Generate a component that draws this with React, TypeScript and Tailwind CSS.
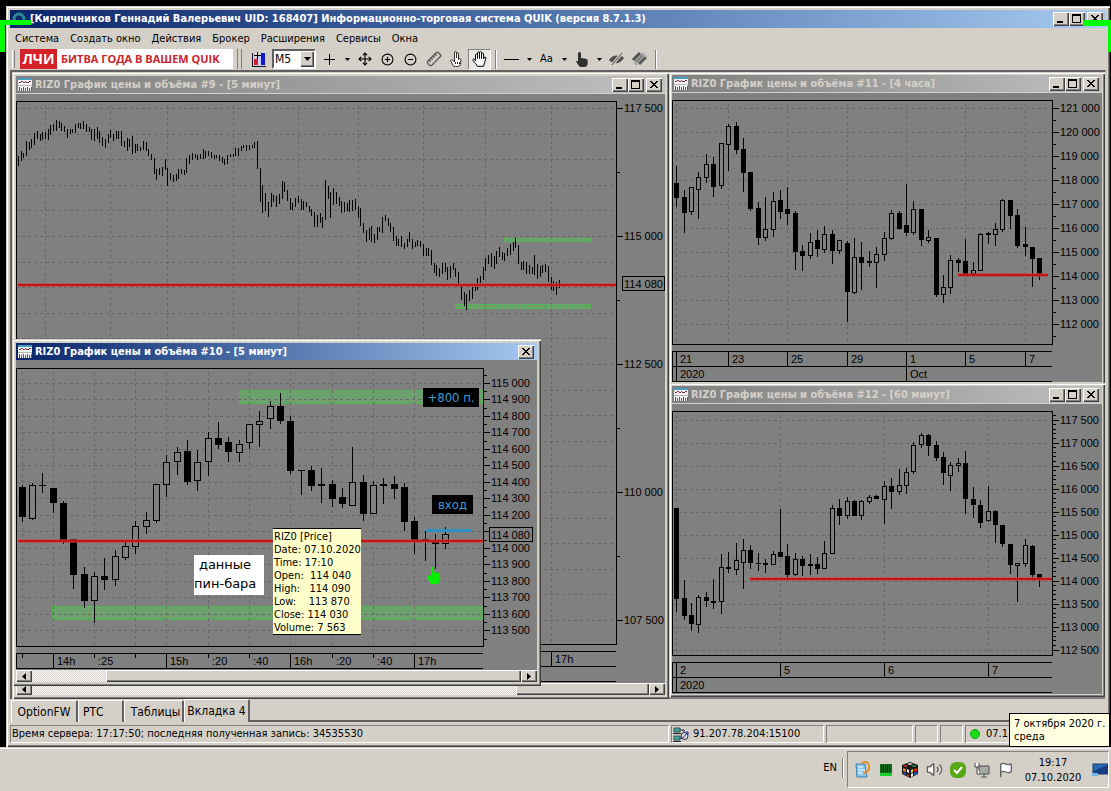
import type { ReactNode } from 'react'
import { Move, CirclePlus, CircleMinus, Ruler, EyeOff, Flag, Volume2 } from 'lucide-react'

// Chart data is stored in thirds of a pixel, see px()
type Candle = [x: number, high: number, low: number, top: number, bottom: number, up: 0 | 1]
type Bar = [x: number, high: number, low: number]

const UI = "font-['DejaVu_Sans_Condensed','DejaVu_Sans',sans-serif]"
const AXIS = "font-['Liberation_Sans',Arial,sans-serif] text-[11px]"
const RAISED = 'bg-[#d4d0c8] shadow-[inset_1px_1px_#ffffff,inset_-1px_-1px_#404040,inset_-2px_-2px_#808080]'
const FRAME = 'bg-[#d4d0c8] shadow-[inset_1px_1px_#d4d0c8,inset_2px_2px_#ffffff,inset_-1px_-1px_#404040,inset_-2px_-2px_#808080]'
const SUNKEN = 'border border-t-[#808080] border-l-[#808080] border-r-white border-b-white'

const MENU = ['Система', 'Создать окно', 'Действия', 'Брокер', 'Расширения', 'Сервисы', 'Окна']

const BARS_9: Bar[] = [
  [55, 183, 212], [65, 168, 195], [70, 175, 186], [79, 138, 180], [88, 141, 162], [95, 132, 156], [103, 114, 147],
  [112, 108, 129], [121, 117, 137], [127, 111, 132], [137, 111, 131], [145, 102, 132], [151, 90, 117], [160, 87, 105],
  [170, 75, 107], [178, 78, 98], [184, 84, 105], [193, 93, 110], [202, 102, 126], [211, 102, 114], [217, 102, 111],
  [226, 87, 111], [235, 84, 98], [241, 84, 99], [250, 78, 99], [260, 87, 108], [268, 96, 110], [274, 102, 134],
  [283, 102, 135], [292, 96, 129], [298, 108, 141], [307, 126, 150], [316, 132, 158], [325, 117, 143], [331, 105, 126],
  [340, 117, 135], [349, 110, 129], [355, 108, 131], [364, 108, 150], [373, 138, 153], [382, 129, 165], [388, 132, 153],
  [397, 123, 174], [406, 147, 171], [412, 148, 165], [421, 156, 167], [430, 138, 164], [439, 141, 167], [445, 162, 182],
  [454, 178, 192], [463, 189, 234], [469, 222, 252], [478, 220, 237], [487, 216, 240], [496, 192, 224], [502, 219, 272],
  [511, 234, 252], [520, 240, 258], [529, 237, 256], [535, 222, 249], [544, 222, 234], [553, 225, 237], [559, 189, 231],
  [568, 180, 204], [577, 174, 192], [586, 177, 186], [592, 180, 192], [601, 177, 189], [610, 162, 189], [616, 168, 186],
  [625, 168, 180], [634, 171, 186], [643, 180, 189], [649, 180, 186], [658, 180, 197], [667, 186, 203], [673, 192, 209],
  [682, 180, 204], [691, 177, 185], [700, 177, 183], [706, 159, 180], [715, 159, 180], [724, 153, 165], [730, 150, 158],
  [739, 151, 165], [748, 151, 164], [757, 150, 156], [763, 141, 156], [772, 138, 219], [781, 219, 318], [787, 270, 351],
  [796, 294, 345], [805, 321, 363], [814, 294, 335], [820, 300, 318], [829, 303, 333], [838, 297, 326], [847, 258, 309],
  [853, 261, 290], [862, 285, 317], [871, 309, 342], [877, 324, 342], [886, 309, 333], [895, 303, 321], [904, 312, 342],
  [910, 318, 342], [919, 321, 335], [928, 333, 350], [934, 342, 360], [943, 351, 393], [952, 360, 393], [961, 354, 381],
  [967, 366, 396], [976, 255, 372], [985, 273, 309], [991, 291, 368], [1000, 279, 327], [1009, 291, 324], [1018, 306, 330],
  [1024, 318, 353], [1033, 321, 350], [1042, 324, 345], [1048, 315, 350], [1057, 315, 345], [1066, 312, 342], [1075, 333, 368],
  [1081, 339, 392], [1090, 384, 413], [1099, 405, 438], [1108, 399, 432], [1114, 393, 438], [1123, 417, 443], [1132, 396, 434],
  [1138, 396, 410], [1147, 366, 413], [1156, 360, 377], [1165, 369, 390], [1171, 384, 410], [1180, 396, 437], [1189, 423, 450],
  [1195, 432, 450], [1204, 423, 455], [1213, 444, 461], [1222, 432, 454], [1228, 411, 440], [1237, 432, 459], [1246, 441, 455],
  [1252, 435, 452], [1261, 438, 453], [1270, 447, 482], [1279, 459, 482], [1285, 459, 482], [1294, 465, 509], [1303, 504, 533],
  [1309, 510, 540], [1318, 519, 543], [1327, 504, 534], [1336, 504, 528], [1342, 516, 552], [1351, 513, 548], [1360, 504, 522],
  [1366, 519, 543], [1375, 531, 567], [1384, 573, 614], [1393, 591, 630], [1399, 597, 644], [1408, 585, 615], [1417, 576, 611],
  [1426, 573, 585], [1432, 549, 582], [1441, 543, 563], [1450, 516, 552], [1456, 489, 527], [1465, 480, 506], [1474, 474, 515],
  [1483, 483, 521], [1489, 468, 506], [1498, 456, 483], [1507, 471, 494], [1513, 474, 495], [1522, 459, 482], [1531, 447, 479],
  [1540, 441, 465], [1546, 429, 458], [1555, 450, 506], [1564, 501, 524], [1570, 498, 522], [1579, 501, 534], [1588, 510, 536],
  [1597, 516, 536], [1603, 480, 537], [1612, 507, 551], [1621, 513, 545], [1627, 510, 533], [1636, 507, 528], [1645, 513, 560],
  [1654, 546, 582], [1660, 558, 587], [1669, 561, 597], [1678, 555, 576],
]

const CANDLES_10: Candle[] = [
  [67, 435, 543, 441, 528, 0], [97, 430, 537, 437, 535, 1], [127, 399, 456, 435, 437, 0], [160, 444, 518, 444, 488, 0],
  [191, 484, 609, 489, 603, 0], [220, 597, 746, 598, 704, 0], [253, 682, 803, 702, 782, 0], [284, 696, 846, 709, 782, 1],
  [314, 654, 749, 708, 719, 0], [346, 630, 735, 649, 718, 1], [376, 606, 657, 619, 653, 1], [406, 543, 641, 559, 619, 1],
  [439, 516, 581, 542, 559, 1], [470, 432, 548, 433, 541, 1], [500, 345, 470, 367, 433, 1], [532, 321, 402, 337, 364, 1],
  [562, 300, 432, 333, 423, 0], [593, 330, 450, 367, 422, 1], [626, 276, 405, 295, 364, 1], [655, 246, 326, 294, 314, 0],
  [685, 291, 365, 307, 335, 0], [718, 300, 365, 313, 338, 1], [749, 252, 326, 253, 307, 1], [779, 213, 318, 244, 253, 1],
  [812, 183, 266, 199, 236, 1], [842, 160, 251, 198, 240, 0], [871, 228, 401, 243, 392, 0], [904, 390, 464, 390, 392, 0],
  [934, 378, 450, 390, 437, 0], [964, 384, 486, 433, 437, 0], [997, 421, 500, 432, 476, 0], [1028, 444, 501, 471, 491, 0],
  [1058, 321, 496, 427, 496, 1], [1090, 405, 542, 426, 521, 0], [1120, 423, 521, 436, 520, 1], [1151, 414, 489, 432, 437, 0],
  [1183, 408, 474, 432, 446, 0], [1213, 429, 572, 441, 545, 0], [1243, 531, 641, 543, 600, 0], [1276, 573, 662, 597, 600, 0],
  [1307, 582, 686, 606, 611, 0], [1337, 561, 626, 583, 611, 1],
]

const CANDLES_11: Candle[] = [
  [25, 290, 408, 340, 383, 0], [49, 360, 486, 381, 426, 0], [70, 351, 434, 352, 425, 1], [92, 306, 444, 322, 358, 1],
  [116, 252, 338, 283, 322, 1], [137, 262, 380, 283, 350, 0], [161, 219, 356, 220, 347, 1], [182, 162, 302, 169, 223, 1],
  [206, 156, 249, 168, 239, 0], [227, 205, 363, 237, 308, 0], [248, 306, 420, 307, 416, 0], [271, 396, 524, 415, 503, 0],
  [292, 381, 510, 478, 503, 1], [317, 366, 500, 395, 478, 1], [337, 360, 446, 390, 425, 0], [359, 351, 464, 417, 431, 0],
  [383, 424, 597, 430, 545, 0], [404, 525, 602, 543, 557, 0], [428, 489, 566, 517, 556, 1], [449, 480, 560, 510, 536, 0],
  [470, 468, 546, 493, 538, 1], [494, 480, 581, 492, 542, 0], [515, 510, 551, 511, 542, 1], [539, 514, 755, 519, 665, 0],
  [560, 504, 670, 562, 667, 1], [581, 516, 659, 561, 578, 0], [605, 543, 588, 573, 577, 0], [626, 532, 651, 553, 577, 1],
  [650, 486, 572, 505, 553, 1], [671, 420, 509, 430, 505, 1], [695, 423, 479, 430, 476, 0], [716, 342, 497, 465, 488, 0],
  [737, 393, 494, 418, 487, 1], [761, 417, 527, 418, 509, 0], [782, 480, 516, 502, 510, 1], [806, 504, 678, 505, 674, 0],
  [827, 615, 698, 652, 674, 1], [848, 555, 671, 571, 653, 1], [872, 564, 605, 571, 578, 0], [893, 507, 612, 573, 611, 0],
  [917, 576, 612, 601, 611, 1], [938, 489, 602, 493, 601, 1], [962, 486, 521, 489, 493, 0], [983, 459, 527, 479, 494, 1],
  [1004, 387, 483, 391, 479, 1], [1028, 390, 476, 391, 437, 0], [1049, 417, 533, 436, 527, 0], [1073, 471, 557, 522, 530, 0],
  [1094, 531, 650, 531, 566, 0], [1115, 564, 627, 565, 612, 0],
]

const CANDLES_12: Candle[] = [
  [25, 385, 693, 385, 656, 0], [49, 600, 719, 655, 707, 0], [70, 669, 752, 706, 731, 0], [92, 645, 758, 652, 734, 1],
  [116, 636, 680, 651, 662, 0], [137, 597, 684, 663, 667, 0], [161, 522, 701, 562, 665, 1], [182, 516, 578, 562, 565, 0],
  [206, 489, 584, 541, 568, 1], [227, 477, 624, 511, 548, 1], [248, 495, 566, 510, 548, 0], [271, 519, 570, 549, 551, 0],
  [292, 537, 578, 549, 553, 0], [317, 513, 554, 523, 553, 1], [337, 387, 530, 516, 530, 0], [359, 492, 593, 529, 584, 0],
  [383, 519, 585, 538, 584, 1], [404, 528, 586, 537, 557, 0], [428, 523, 584, 552, 556, 0], [449, 531, 581, 552, 566, 0],
  [470, 483, 566, 520, 565, 1], [494, 375, 521, 385, 520, 1], [515, 357, 434, 385, 407, 0], [539, 351, 416, 363, 406, 1],
  [560, 360, 407, 364, 407, 0], [581, 362, 418, 364, 407, 1], [605, 345, 371, 352, 364, 1], [626, 346, 356, 349, 356, 0],
  [650, 303, 429, 319, 359, 1], [671, 294, 386, 318, 335, 0], [695, 267, 344, 316, 334, 1], [716, 264, 341, 276, 316, 1],
  [737, 186, 281, 196, 275, 1], [761, 159, 203, 166, 194, 1], [782, 162, 227, 165, 197, 0], [806, 183, 242, 195, 233, 0],
  [827, 216, 314, 231, 278, 0], [848, 246, 332, 256, 287, 1], [872, 234, 275, 250, 257, 1], [893, 213, 401, 250, 356, 0],
  [917, 321, 413, 357, 374, 0], [938, 360, 443, 375, 428, 0], [962, 318, 423, 394, 422, 1], [983, 390, 486, 394, 434, 0],
  [1004, 435, 500, 436, 491, 0], [1027, 492, 581, 493, 554, 0], [1049, 550, 665, 550, 556, 1], [1073, 477, 560, 496, 551, 1],
  [1094, 495, 590, 498, 584, 0], [1115, 582, 620, 583, 598, 0],
]

const px = (v: number) => Math.floor(v / 3)

const series = (from: number, step: number, count: number) =>
  Array.from({ length: count }, (_, i) => Math.round(from + i * step))

const price = (v: number) => `${Math.floor(v / 1000)} ${String(v % 1000).padStart(3, '0')}`

function HLine({ x1, x2, y, color = '#000' }: { x1: number; x2: number; y: number; color?: string }) {
  return <rect x={x1} y={y} width={x2 - x1} height={1} fill={color} />
}

function VLine({ x, y1, y2 }: { x: number; y1: number; y2: number }) {
  return <rect x={x} y={y1} width={1} height={y2 - y1} />
}

function Grid({ left, top, right, bottom, xs, ys }: {
  left: number; top: number; right: number; bottom: number; xs: number[]; ys: number[]
}) {
  return (
    <g>
      <g stroke="#686868" strokeDasharray="3 3">
        {xs.map((x) => <line key={x} x1={x + 0.5} x2={x + 0.5} y1={top + 4} y2={bottom} />)}
        {ys.map((y) => <line key={y} x1={left} x2={right} y1={y + 0.5} y2={y + 0.5} />)}
      </g>
      <HLine x1={left} x2={right + 1} y={top} />
      <HLine x1={left} x2={right + 1} y={bottom} />
      <VLine x={left} y1={top} y2={bottom} />
      <VLine x={right} y1={top} y2={bottom} />
    </g>
  )
}

function PriceAxis({ x, majors, minors, labels }: { x: number; majors: number[]; minors: number[]; labels: string[] }) {
  return (
    <g>
      {minors.map((y) => <HLine key={`m${y}`} x1={x} x2={x + 4} y={y} />)}
      {majors.map((y, i) => (
        <g key={y}>
          <HLine x1={x} x2={x + 7} y={y} />
          <text x={x + 8} y={y + 4} className={AXIS}>{labels[i]}</text>
        </g>
      ))}
    </g>
  )
}

function Candles({ data, ox, oy, half }: { data: Candle[]; ox: number; oy: number; half: number }) {
  return (
    <g>
      {data.map(([x, high, low, top, bottom, up]) => {
        const cx = ox + px(x)
        const t = oy + px(top)
        const h = Math.max(px(bottom) - px(top) + 1, 1)
        return (
          <g key={x}>
            <VLine x={cx} y1={oy + px(high)} y2={oy + px(low) + 1} />
            <rect x={cx - half} y={t} width={half * 2 + 1} height={h} />
            {up === 1 && h > 2 && <rect x={cx - half + 1} y={t + 1} width={half * 2 - 1} height={h - 2} fill="#808080" />}
          </g>
        )
      })}
    </g>
  )
}

function RedLine({ x1, x2, y }: { x1: number; x2: number; y: number }) {
  return (
    <g>
      <rect x={x1} y={y - 1} width={x2 - x1} height={4} fill="#c04848" opacity={0.6} />
      <rect x={x1} y={y} width={x2 - x1} height={2} fill="#c41414" />
    </g>
  )
}

function GreenZone({ x1, x2, y1, y2 }: { x1: number; x2: number; y1: number; y2: number }) {
  return (
    <g>
      <rect x={x1} y={y1} width={x2 - x1} height={y2 - y1} fill="#58c058" opacity={0.5} />
      <rect x={x1 + 0.5} y={y1 + 0.5} width={x2 - x1 - 1} height={y2 - y1 - 1} fill="none" stroke="#48c048" strokeDasharray="4 2" />
    </g>
  )
}

function ChartCanvas({ viewBox, label, children }: { viewBox: string; label: string; children: ReactNode }) {
  return (
    <svg viewBox={viewBox} role="img" aria-label={label} shapeRendering="crispEdges" className="block w-full h-auto bg-[#808080]">
      {children}
    </svg>
  )
}

function CaptionButton({ kind }: { kind: 'min' | 'max' | 'close' }) {
  return (
    <button aria-label={kind} className={`w-4 h-[14px] flex items-center justify-center ${RAISED} ${kind === 'close' ? 'ml-0.5' : ''}`}>
      <svg width="16" height="14" viewBox="0 0 16 14" shapeRendering="crispEdges" aria-hidden="true">
        {kind === 'min' && <rect x="4" y="9" width="6" height="2" />}
        {kind === 'max' && <path d="M3 2h9v9H3z M4 4v6h7V4z" fillRule="evenodd" />}
        {kind === 'close' && <path d="M4 3h2v1h1v1h2V4h1V3h2v1h-1v1h-1v1H9v1h1v1h1v1h1v1h-2V9H9V8H7v1H6v1H4V9h1V8h1V7h1V6H6V5H5V4H4z" />}
      </svg>
    </button>
  )
}

function ChartIcon() {
  return (
    <svg width="14" height="13" viewBox="0 0 14 13" shapeRendering="crispEdges" aria-hidden="true" className="shrink-0">
      <rect width="14" height="13" fill="#f4f4f4" />
      <rect width="14" height="2" fill="#4a9cc0" />
      <path d="M1 4h2v1H1zM3 3h2v1H3zM5 4h2v1H5zM7 3h1v1H7zM8 4h3v1H8zM11 3h2v1h-2z" fill="#803040" />
      <rect y="7" width="14" height="1" fill="#b8b8b8" />
      <path d="M1 9h1v4H1zM3 10h1v3H3zM5 9h1v4H5zM7 10h1v3H7zM9 9h1v4H9zM11 10h1v3h-1zM13 9h1v4h-1z" fill="#1c6890" />
    </svg>
  )
}

function ChartTitle({ title, active, closeOnly }: { title: string; active?: boolean; closeOnly?: boolean }) {
  return (
    <div
      className={`h-[18px] flex items-center gap-[3px] pl-0.5 pr-[3px] border-b ${active
        ? 'bg-linear-to-r from-[#0a246a] to-[#a6caf0] text-white border-[#808080]'
        : 'bg-linear-to-r from-[#808080] to-[#c0c0c0] text-[#d4d0c8] border-[#d4d0c8]'
        }`}
    >
      <ChartIcon />
      <h2 className="flex-1 truncate text-[11px] leading-4 font-bold">{title}</h2>
      <div className="flex">
        {!closeOnly && <CaptionButton kind="min" />}
        {!closeOnly && <CaptionButton kind="max" />}
        <CaptionButton kind="close" />
      </div>
    </div>
  )
}

function ScrollBar({ before, thumb }: { before: string; thumb: string }) {
  return (
    <div className="h-3 flex bg-[repeating-conic-gradient(#ffffff_0_25%,#d4d0c8_0_50%)] bg-[length:2px_2px]">
      <button aria-label="Влево" className={`w-4 shrink-0 flex items-center justify-center ${RAISED}`}>
        <svg width="4" height="7" viewBox="0 0 4 7" aria-hidden="true"><path d="M4 0v7L0 3.5z" /></svg>
      </button>
      <div className={before} />
      <div className={`${thumb} ${RAISED}`} />
      <button aria-label="Вправо" className={`w-4 shrink-0 flex items-center justify-center ${RAISED}`}>
        <svg width="4" height="7" viewBox="0 0 4 7" aria-hidden="true"><path d="M0 0v7l4-3.5z" /></svg>
      </button>
    </div>
  )
}

function Chart9() {
  return (
    <ChartCanvas viewBox="16 94 649 589" label="RIZ0, 5 минут">
      <Grid
        left={16} top={101} right={616} bottom={644}
        xs={[45, 110, 167, 233, 298, 358, 423, 485, 551]}
        ys={series(108, 25.6, 21)}
      />
      <PriceAxis
        x={616}
        majors={series(108, 128, 5)}
        minors={series(172, 128, 4)}
        labels={[117500, 115000, 112500, 110000, 107500].map(price)}
      />
      <GreenZone x1={504} x2={591} y1={238} y2={242} />
      <GreenZone x1={455} x2={591} y1={304} y2={309} />
      {BARS_9.map(([x, high, low]) => <VLine key={x} x={px(x)} y1={95 + px(high)} y2={95 + px(low) + 1} />)}
      <RedLine x1={18} x2={616} y={284} />
      <rect x={622.5} y={276.5} width={42} height={14} fill="#808080" stroke="#000" />
      <text x={624} y={288} className={AXIS}>114 080</text>
      <HLine x1={16} x2={616} y={651} />
      <HLine x1={16} x2={616} y={666} />
      <HLine x1={16} x2={616} y={681} />
      <VLine x={551} y1={651} y2={666} />
      <text x={555} y={663} className={AXIS}>17h</text>
    </ChartCanvas>
  )
}

const TIMES_10: [number, string][] = [
  [53, '14h'], [94, ':25'], [166, '15h'], [208, ':20'], [249, ':40'], [290, '16h'], [332, ':20'], [373, ':40'], [414, '17h'],
]

function Chart10() {
  return (
    <ChartCanvas viewBox="16 361 521 309" label="RIZ0, 5 минут, увеличено">
      <GreenZone x1={239} x2={483} y1={390} y2={404} />
      <GreenZone x1={52} x2={483} y1={606} y2={620} />
      <Grid
        left={16} top={368} right={483} bottom={646}
        xs={[22, 53, 94, 135, 166, 208, 249, 290, 332, 373, 414]}
        ys={series(383, 16.47, 16)}
      />
      <PriceAxis
        x={483}
        majors={series(383, 16.47, 16)}
        minors={series(375, 16.47, 17)}
        labels={series(115000, -100, 16).map((p) => (p === 114100 ? '' : price(p)))}
      />
      <Candles data={CANDLES_10} ox={0} oy={340} half={3} />
      <rect x={426} y={529} width={45} height={3} fill="#2c90c4" />
      <RedLine x1={18} x2={483} y={540} />
      <rect x={489.5} y={527.5} width={43} height={14} fill="#808080" stroke="#000" />
      <text x={491} y={539} className={AXIS}>114 080</text>
      <path
        d="M431 567h2v6l2-1 2 1 2 0 1 2v5l-2 4h-7l-3-5-1-3 2-1 2 1z"
        fill="#00f000" shapeRendering="auto"
      />
      <HLine x1={16} x2={483} y={653} />
      <HLine x1={16} x2={483} y={668} />
      <VLine x={16} y1={653} y2={668} />
      {[22, 135].map((x) => <VLine key={x} x={x} y1={653} y2={658} />)}
      {TIMES_10.map(([x, t]) => (
        <g key={x}>
          <VLine x={x} y1={653} y2={t.endsWith('h') ? 668 : 658} />
          <text x={x + 4} y={665} className={AXIS}>{t}</text>
        </g>
      ))}
    </ChartCanvas>
  )
}

function DateRows({ y, days, months }: { y: number; days: [number, string][]; months: [number, string][] }) {
  return (
    <g>
      {[y, y + 15, y + 30].map((v) => <HLine key={v} x1={672} x2={1052} y={v} />)}
      <VLine x={672} y1={y} y2={y + 30} />
      {days.map(([x, t]) => (
        <g key={x}>
          <VLine x={x} y1={y} y2={y + 15} />
          <text x={x + 4} y={y + 12} className={AXIS}>{t}</text>
        </g>
      ))}
      {months.map(([x, t]) => (
        <g key={x}>
          <VLine x={x} y1={y + 15} y2={y + 30} />
          <text x={x + 4} y={y + 27} className={AXIS}>{t}</text>
        </g>
      ))}
    </g>
  )
}

function Chart11() {
  return (
    <ChartCanvas viewBox="672 93 430 289" label="RIZ0, 4 часа">
      <Grid left={672} top={100} right={1052} bottom={344} xs={[676, 728, 787, 847, 906, 965, 1025]} ys={series(108, 24, 10)} />
      <PriceAxis
        x={1052}
        majors={series(108, 24, 10)}
        minors={series(120, 24, 10)}
        labels={series(121000, -1000, 10).map(price)}
      />
      <Candles data={CANDLES_11} ox={668} oy={70} half={2} />
      <RedLine x1={958} x2={1048} y={274} />
      <DateRows
        y={351}
        days={[[676, '21'], [728, '23'], [787, '25'], [847, '29'], [906, '1'], [965, '5'], [1025, '7']]}
        months={[[676, '2020'], [906, 'Oct']]}
      />
    </ChartCanvas>
  )
}

function Chart12() {
  return (
    <ChartCanvas viewBox="672 404 430 290" label="RIZ0, 60 минут">
      <Grid left={672} top={411} right={1052} bottom={655} xs={[676, 780, 884, 988]} ys={series(420, 23, 11)} />
      <PriceAxis
        x={1052}
        majors={series(420, 23, 11)}
        minors={series(415, 4.6, 52)}
        labels={series(117500, -500, 11).map(price)}
      />
      <Candles data={CANDLES_12} ox={668} oy={380} half={2} />
      <RedLine x1={750} x2={1052} y={578} />
      <DateRows y={662} days={[[676, '2'], [780, '5'], [884, '6'], [988, '7']]} months={[[676, '2020']]} />
    </ChartCanvas>
  )
}

const TOOLTIP = [
  'RIZ0 [Price]', 'Date: 07.10.2020', 'Time: 17:10', 'Open:  114 040', 'High:   114 090', 'Low:    113 870', 'Close: 114 030', 'Volume: 7 563',
]

function Workspace() {
  return (
    <main className="relative grid grid-cols-[657fr_436fr] items-start bg-[#808080] border-t-2 border-l-2 border-r border-t-[#606060] border-l-[#606060] border-r-[#d4d0c8]">
      <section className={`p-1 ${FRAME}`}>
        <ChartTitle title="RIZ0 График цены и объёма #9 - [5 минут]" />
        <Chart9 />
        <ScrollBar before="flex-1" thumb="w-[133px]" />
      </section>

      <div>
        <section className={`p-[3px] ${FRAME}`}>
          <ChartTitle title="RIZ0 График цены и объёма #11 - [4 часа]" />
          <Chart11 />
        </section>
        <section className={`relative -mt-0.5 p-[3px] ${FRAME}`}>
          <ChartTitle title="RIZ0 График цены и объёма #12 - [60 минут]" />
          <Chart12 />
        </section>
      </div>

      {/* Floating chart window on top of #9 */}
      <section className={`absolute left-0 top-[267px] w-[529px] p-1 ${FRAME}`}>
        <ChartTitle title="RIZ0 График цены и объёма #10 - [5 минут]" active closeOnly />
        <div className="relative">
          <Chart10 />
          <span className="absolute left-[407px] top-[27px] w-14 h-[19px] bg-black text-[#3a9ad8] text-center text-[13px] leading-[19px] whitespace-nowrap">+800 п.</span>
          <span className="absolute left-[416px] top-[134px] w-[41px] h-[19px] bg-black text-[#3a9ad8] text-center text-[13px] leading-[19px]">вход</span>
          <p className="absolute left-[178px] top-[194px] w-[70px] h-10 pr-2 bg-white text-center font-['DejaVu_Sans',sans-serif] text-[13px] leading-[19px] whitespace-nowrap">
            данные<br />пин-бара
          </p>
          <div role="tooltip" className="absolute left-[257px] top-[167px] w-[88px] h-[107px] pl-px pt-px bg-[#ffffcc] border-t border-b border-black text-[11px] leading-[13px] whitespace-pre">
            {TOOLTIP.map((line) => <div key={line}>{line}</div>)}
          </div>
        </div>
        <ScrollBar before="w-[74px]" thumb="flex-1" />
      </section>
    </main>
  )
}

function Separator() {
  return <span className="w-[9px] h-[19px] flex justify-center" aria-hidden="true"><span className="w-[2px] bg-[#808080] border-r border-white" /></span>
}

function Tool({ label, pressed, children }: { label: string; pressed?: boolean; children: ReactNode }) {
  return (
    <button
      aria-label={label}
      className={`w-[23px] h-[21px] shrink-0 flex items-center justify-center ${pressed ? `${SUNKEN} bg-[#eae8e4]` : ''}`}
    >
      {children}
    </button>
  )
}

function Drop() {
  return (
    <button aria-label="Список" className="w-3 h-[21px] shrink-0 flex items-center justify-center">
      <svg width="5" height="3" viewBox="0 0 5 3" aria-hidden="true"><path d="M0 0h5L2.5 3z" /></svg>
    </button>
  )
}

function Toolbar() {
  return (
    <div className="h-[22px] flex items-center pl-0.5" role="toolbar">
      <span className="w-[3px] h-[18px] mr-[5px] border-l border-r border-l-white border-r-[#808080]" />
      <a href="#" className="w-[213px] h-5 shrink-0 flex bg-white font-['Open_Sans',sans-serif] font-bold">
        <span className="w-[37px] bg-[#d42027] text-white text-center text-[14px] leading-5">ЛЧИ</span>
        <span className="pl-1 text-[#c8252c] text-[11px] leading-5 whitespace-nowrap">БИТВА ГОДА В ВАШЕМ QUIK</span>
      </a>
      <span className="w-[5px] h-5 ml-1 mr-[5px] border-l border-r border-l-[#808080] border-r-[#808080]" />
      <Tool label="Добавить график">
        <svg width="15" height="15" viewBox="0 0 15 15" shapeRendering="crispEdges" aria-hidden="true">
          <path d="M1 1v13h14" fill="none" stroke="#101030" />
          <rect x="3" y="7" width="4" height="6" fill="#d02030" />
          <rect x="7" y="4" width="3" height="9" fill="#c8d0ff" />
          <rect x="10" y="1" width="4" height="12" fill="#1018c8" />
          <path d="M3 3h7v1H3zM6 0h1v7H6z" fill="#000" />
        </svg>
      </Tool>
      <label className="relative w-11 h-5 ml-0.5 mr-0.5 shrink-0 border-2 border-t-[#606060] border-l-[#606060] border-r-white border-b-white bg-white">
        <span className="sr-only">Интервал</span>
        <select className="block w-full h-full appearance-none bg-white pl-px text-[12px] leading-4 outline-none" defaultValue="M5">
          <option>M5</option>
          <option>M60</option>
        </select>
        <span className={`pointer-events-none absolute right-0 top-0 w-[14px] h-4 flex items-center justify-center ${RAISED}`}>
          <svg width="7" height="4" viewBox="0 0 7 4" aria-hidden="true"><path d="M0 0h7L3.5 4z" /></svg>
        </span>
      </label>
      <Tool label="Перекрестие">
        <svg width="11" height="11" viewBox="0 0 11 11" shapeRendering="crispEdges" aria-hidden="true"><path d="M5 0h1v5h5v1H6v5H5V6H0V5h5z" /></svg>
      </Tool>
      <Drop />
      <Tool label="Переместить"><Move size={14} strokeWidth={2} /></Tool>
      <Tool label="Увеличить"><CirclePlus size={13} strokeWidth={2} /></Tool>
      <Tool label="Уменьшить"><CircleMinus size={13} strokeWidth={2} /></Tool>
      <Tool label="Линейка"><Ruler size={16} strokeWidth={2} className="text-[#585858] -scale-x-100" /></Tool>
      <Tool label="Указатель">
        <svg width="13" height="16" viewBox="0 0 13 16" fill="#fff" stroke="#303030" aria-hidden="true">
          <path d="M4.500 9V2q0-1.500 1-1.500t1 1.500v5V3q0-1.300 1-1.300t1 1.300v5.500q.5-1.500 1.500-1t.8 1.500v3q0 3.500-3.500 3.500h-2q-2.500 0-3-2.500L.5 9.500q.5-1.300 2-.5l2 2z" />
          <path d="M5.500 11v2M7.500 11v2M9.500 11v2" />
        </svg>
      </Tool>
      <Tool label="Рука" pressed>
        <svg width="15" height="16" viewBox="0 0 15 16" fill="#fff" stroke="#000" aria-hidden="true">
          <path d="M3.500 8.500V4q0-1 1-1t1 1v3.500V2q0-1 1-1t1 1v5.500V1.500q0-1 1-1t1 1v6V3q0-1 1-1t1 1v5l.5-1.500q1-1 2 .3l-1.500 5-1 3.500h-6l-2-3L1 9.500q-.5-1.500.7-1.500t1.800 2z" />
        </svg>
      </Tool>
      <Separator />
      <Tool label="Линия"><span className="w-[15px] h-px bg-black" /></Tool>
      <Drop />
      <Tool label="Текст"><span className="text-[11px] leading-4">Aa</span></Tool>
      <Drop />
      <Tool label="Метка">
        <svg width="12" height="15" viewBox="0 0 12 15" fill="#303030" aria-hidden="true">
          <path d="M3.500 0q1.500 0 1.500 1.500V6l5 .8q1.700.3 1.700 2V12q-.7 3-3 3H5q-1.500 0-2.300-1.500L0 9.500q.3-1.500 2 0V1.500Q2 0 3.500 0z" />
        </svg>
      </Tool>
      <Drop />
      <Tool label="Скрыть">
        <svg width="17" height="14" viewBox="0 0 17 14" aria-hidden="true">
          <path d="M1 8Q5 2 11 4L6 10Q3 11 1 8z" fill="#505050" />
          <path d="M16 6q-4 6-9 5l5-7q3 0 4 2z" fill="#505050" />
          <path d="M4 13L14 1" stroke="#d4d0c8" strokeWidth="3" />
          <path d="M4 13L14 1" stroke="#484848" strokeWidth="1" />
        </svg>
      </Tool>
      <Tool label="Удалить объекты">
        <svg width="17" height="16" viewBox="0 0 17 16" strokeWidth="3" aria-hidden="true">
          <path d="M2 9l7-7" stroke="#505050" />
          <path d="M5 11l7-7" stroke="#808080" />
          <path d="M8 13l7-7" stroke="#585858" />
          <path d="M3 11l3 3M11 2l4 4" stroke="#a8a8a8" strokeWidth="2" />
        </svg>
      </Tool>
      <Separator />
    </div>
  )
}

function Tabs() {
  const tab = 'shrink-0 h-[22px] border-t border-l border-white border-r-2 border-r-[#606060] rounded-t-[2px] text-[12px] leading-5'
  return (
    <nav className="h-[25px] flex items-end pl-px pb-0.5">
      <button className={`${tab} w-[67px]`}>OptionFW</button>
      <button className={`${tab} w-[46px] text-left pl-1`}>РТС</button>
      <button className={`${tab} w-[60px] pl-1 border-r-0`}>Таблицы</button>
      <button className={`${tab} w-[66px] h-[23px] text-[11px]`}>Вкладка 4</button>
      <span className="flex-1 border-b-2 border-[#606060]" />
    </nav>
  )
}

function StatusBar() {
  const cell = `h-[18px] flex items-center ${SUNKEN}`
  return (
    <footer className="h-[19px] flex gap-0.5 pt-px text-[11px] leading-4">
      <div className={`${cell} flex-1 pl-px`}>Время сервера: 17:17:50; последняя полученная запись: 34535530</div>
      <div className={`${cell} w-[153px] pl-px gap-1`}>
        <svg width="16" height="15" viewBox="0 0 16 15" aria-hidden="true">
          <path d="M1 1h6v4H1zM1 9h6v4H1z" fill="#30a8a0" stroke="#405050" />
          <path d="M0 6.500h8M0 14.500h8M7 3h4v3M7 11h3" fill="none" stroke="#202020" />
          <circle cx="11.500" cy="9" r="3.500" fill="#d8d8d8" stroke="#303048" />
          <path d="M9 12l5-6M13 5h2v3" stroke="#1828a0" fill="none" />
        </svg>
        91.207.78.204:15100
      </div>
      <div className={`${cell} w-[87px]`} />
      <div className={`${cell} w-[23px]`} />
      <div className={`${cell} w-[23px]`} />
      <div className={`${cell} w-[141px] pl-1 gap-[6px]`}>
        <span className="w-[10px] h-[10px] rounded-full bg-[#18e018] border border-[#10a010]" />
        07.1
      </div>
    </footer>
  )
}

function Taskbar() {
  return (
    <div className={`${UI} h-11 flex justify-end items-start pt-1 pr-0.5 bg-[#d4d0c8] shadow-[inset_0_1px_#d4d0c8,inset_0_2px_#ffffff] text-[11px]`}>
      <button className="h-[34px] pr-[5px] text-[11px]">EN</button>
      <span className="w-[2px] h-5 mt-[7px] mr-[3px] bg-[#808080] border-r border-white" />
      <div className={`h-[37px] w-[262px] flex items-center pl-[6px] ${SUNKEN}`}>
        <div className="flex gap-2 items-center">
          <svg width="16" height="18" viewBox="0 0 16 18" aria-hidden="true">
            <path d="M2 3h9l2 13H3z" fill="#8cc8ec" stroke="#3880b0" />
            <path d="M4 6h5M4 9h7M4 12h6" stroke="#fff" />
            <path d="M8 2q6-3 7 3t-6 7" fill="none" stroke="#e09030" strokeWidth="2" />
          </svg>
          <svg width="16" height="16" viewBox="0 0 16 16" shapeRendering="crispEdges" aria-hidden="true">
            <rect x="2" y="2" width="12" height="12" fill="#0c6c18" />
            <path d="M3 3h1v7H3zM5 3h1v7H5zM7 3h1v7H7zM9 3h1v7H9zM11 3h1v7h-1z" fill="#043808" />
            <rect x="2" y="11" width="12" height="3" fill="#18d028" />
          </svg>
          <svg width="16" height="16" viewBox="0 0 16 16" aria-hidden="true">
            <path d="M8 0l8 3v9l-8 4-8-4V3z" fill="#181818" />
            <path d="M8 1l3 1-3 1-3-1z" fill="#e8e8e8" />
            <path d="M3 3l3 1-2 1-3-1z" fill="#e03020" />
            <path d="M12 3l3 1-3 1-3-1z" fill="#28a040" />
            <path d="M1 6l3 1v3L1 9z" fill="#f07020" />
            <path d="M5 7l2 1v3l-2-1z" fill="#f4f4f4" />
            <path d="M1 10l3 1v2l-3-1z" fill="#2050d0" />
            <path d="M5 12l2 1v2l-2-1z" fill="#e03020" />
            <path d="M9 8l2-1v3l-2 1z" fill="#f0d020" />
            <path d="M12 7l3-1v3l-3 1z" fill="#d02828" />
            <path d="M9 12l2-1v3l-2 1z" fill="#f4f4f4" />
            <path d="M12 11l3-1v2l-3 1z" fill="#2860d8" />
          </svg>
          <Volume2 size={17} strokeWidth={2} className="-mr-px text-[#606060] fill-white" />
          <svg width="16" height="16" viewBox="0 0 16 16" aria-hidden="true">
            <rect width="16" height="16" rx="6" fill="#58a818" />
            <path d="M4 8l3 3 5-6" fill="none" stroke="#fff" strokeWidth="2" />
          </svg>
          <svg width="16" height="16" viewBox="0 0 16 16" aria-hidden="true">
            <path d="M5 4h10v8H5zM7 15h6M10 12v3" fill="#a8a8a8" stroke="#505050" />
            <path d="M1 1v4h4V1M3 5v7h3" fill="#fff" stroke="#404040" />
          </svg>
          <Flag size={16} strokeWidth={2} className="text-[#606060] fill-white" />
        </div>
        <time className="flex-1 text-center leading-[15px]" dateTime="2020-10-07T19:17">19:17<br />07.10.2020</time>
        <svg width="16" height="14" viewBox="0 0 16 14" aria-hidden="true">
          <rect x="1" y="1" width="15" height="10" fill="#2868b8" stroke="#183868" />
          <path d="M1 8l15-6v9H1z" fill="#163c84" />
          <path d="M0 10h6v3H0z" fill="#78b8e8" />
        </svg>
      </div>
    </div>
  )
}

export default function App() {
  return (
    <div className={`${UI} relative min-h-screen overflow-hidden bg-black text-black`}>
      <div className={`mt-[6px] ml-[6px] mr-px p-1 ${FRAME}`}>
        <header className="h-[18px] flex items-center gap-1 pl-0.5 pr-[3px] bg-linear-to-r from-[#0a246a] to-[#a6caf0] text-white">
          <svg width="14" height="14" viewBox="0 0 14 14" className="shrink-0" aria-hidden="true">
            <circle cx="7" cy="7" r="5" fill="none" stroke="#2c8890" strokeWidth="3" />
          </svg>
          <h1 className="flex-1 truncate text-[11px] leading-4 font-bold">
            [Кирпичников Геннадий Валерьевич UID: 168407] Информационно-торговая система QUIK (версия 8.7.1.3)
          </h1>
          <div className="flex">
            <CaptionButton kind="min" />
            <CaptionButton kind="max" />
            <CaptionButton kind="close" />
          </div>
        </header>
        <nav className="h-5 flex items-center gap-[11px] pl-[5px] pt-px text-[11px] leading-4">
          {MENU.map((item) => <button key={item}>{item}</button>)}
        </nav>
        <Toolbar />
        <Workspace />
        <Tabs />
        <StatusBar />
      </div>
      <Taskbar />

      {/* Recorder corner marks */}
      <span className="absolute left-0 top-5 w-[31px] h-[5px] bg-[#00ff00]" />
      <span className="absolute left-0 top-5 w-[5px] h-8 bg-[#00ff00]" />
      <span className="absolute right-0 top-5 w-7 h-[6px] bg-[#00ff00]" />
      <span className="absolute right-0 top-5 w-[3px] h-8 bg-[#00ff00]" />

      <div role="tooltip" className="absolute right-px bottom-11 w-[101px] h-[34px] pl-1 pt-[3px] bg-[#ffffe1] border border-black text-[11px] leading-[13px] whitespace-nowrap">
        7 октября 2020 г.<br />среда
      </div>
    </div>
  )
}
